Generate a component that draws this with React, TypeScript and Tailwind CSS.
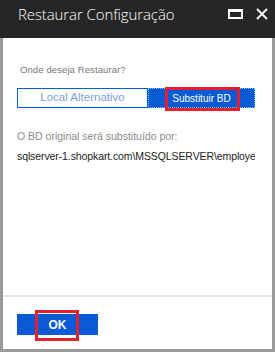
import React from "react";

function RedMark({ className }: { className: string }) {
  return <div className={`pointer-events-none absolute border-[3px] border-[#e5202e] ${className}`} />;
}

export default function App() {
  return (
    <div
      className="w-[275px] h-[352px] flex flex-col bg-white overflow-hidden"
      style={{ fontFamily: '"Liberation Sans", Arial, sans-serif' }}
    >
      <div className="h-[38px] shrink-0 bg-[#262626] flex items-start pl-[18px] pr-[6px] pt-[3px]">
        <h1
          className="flex-1 text-white text-[15px] leading-[22px] font-light tracking-[-0.1px]"
          style={{ fontFamily: '"Open Sans", "Noto Sans", sans-serif' }}
        >
          Restaurar Configuração
        </h1>
        <div className="flex items-center gap-[13px] pt-[5px]">
          <div className="w-[15px] h-[10px] border-2 border-t-[3px] border-white" />
          <svg width="12" height="12" viewBox="0 0 12 12" className="mr-[1px]">
            <path d="M1 1 L11 11 M11 1 L1 11" stroke="white" strokeWidth="1.8" />
          </svg>
        </div>
      </div>

      <div className="flex-1 flex flex-col border-l-[3px] border-r-[3px] border-b-[3px] border-[#9a9a9a]">
        <div className="flex-1 px-[14px]">
          <p className="mt-[24px] ml-[3px] text-[9.5px] leading-[15px] tracking-[0.1px] text-[#777]">Onde deseja Restaurar?</p>

          <div className="relative mt-[11px] flex h-[20px] w-[238px]">
            <div className="w-[131px] border border-[#0a5ad6] flex items-center justify-center text-[11.5px] text-[#7f9de2]">
              Local Alternativo
            </div>
            <div className="flex-1 bg-[#0a5ad6] border border-dotted border-[#5fd0ff] flex items-center justify-center text-[10px] text-white">
              Substituir BD
            </div>
            <RedMark className="left-[148px] top-[-1px] w-[75px] h-[24px]" />
          </div>

          <p className="mt-[21px] text-[10.5px] leading-[15px] text-[#8a8a8a]">O BD original será substituído por:</p>
          <p className="mt-[5px] w-[238px] overflow-hidden whitespace-nowrap text-[10.5px] leading-[15px] tracking-[-0.1px] text-[#222]">
            sqlserver-1.shopkart.com\MSSQLSERVER\employe
          </p>
        </div>

        <div className="relative border-t-2 border-[#e3e3e3] px-[14px] pt-[17px] pb-[14px]">
          <button className="w-[81px] h-[21px] bg-[#0a5ad6] text-white text-[12px] font-bold flex items-center justify-center">
            OK
          </button>
          <RedMark className="left-[32px] top-[13px] w-[44px] h-[31px]" />
        </div>
      </div>
    </div>
  );
}
